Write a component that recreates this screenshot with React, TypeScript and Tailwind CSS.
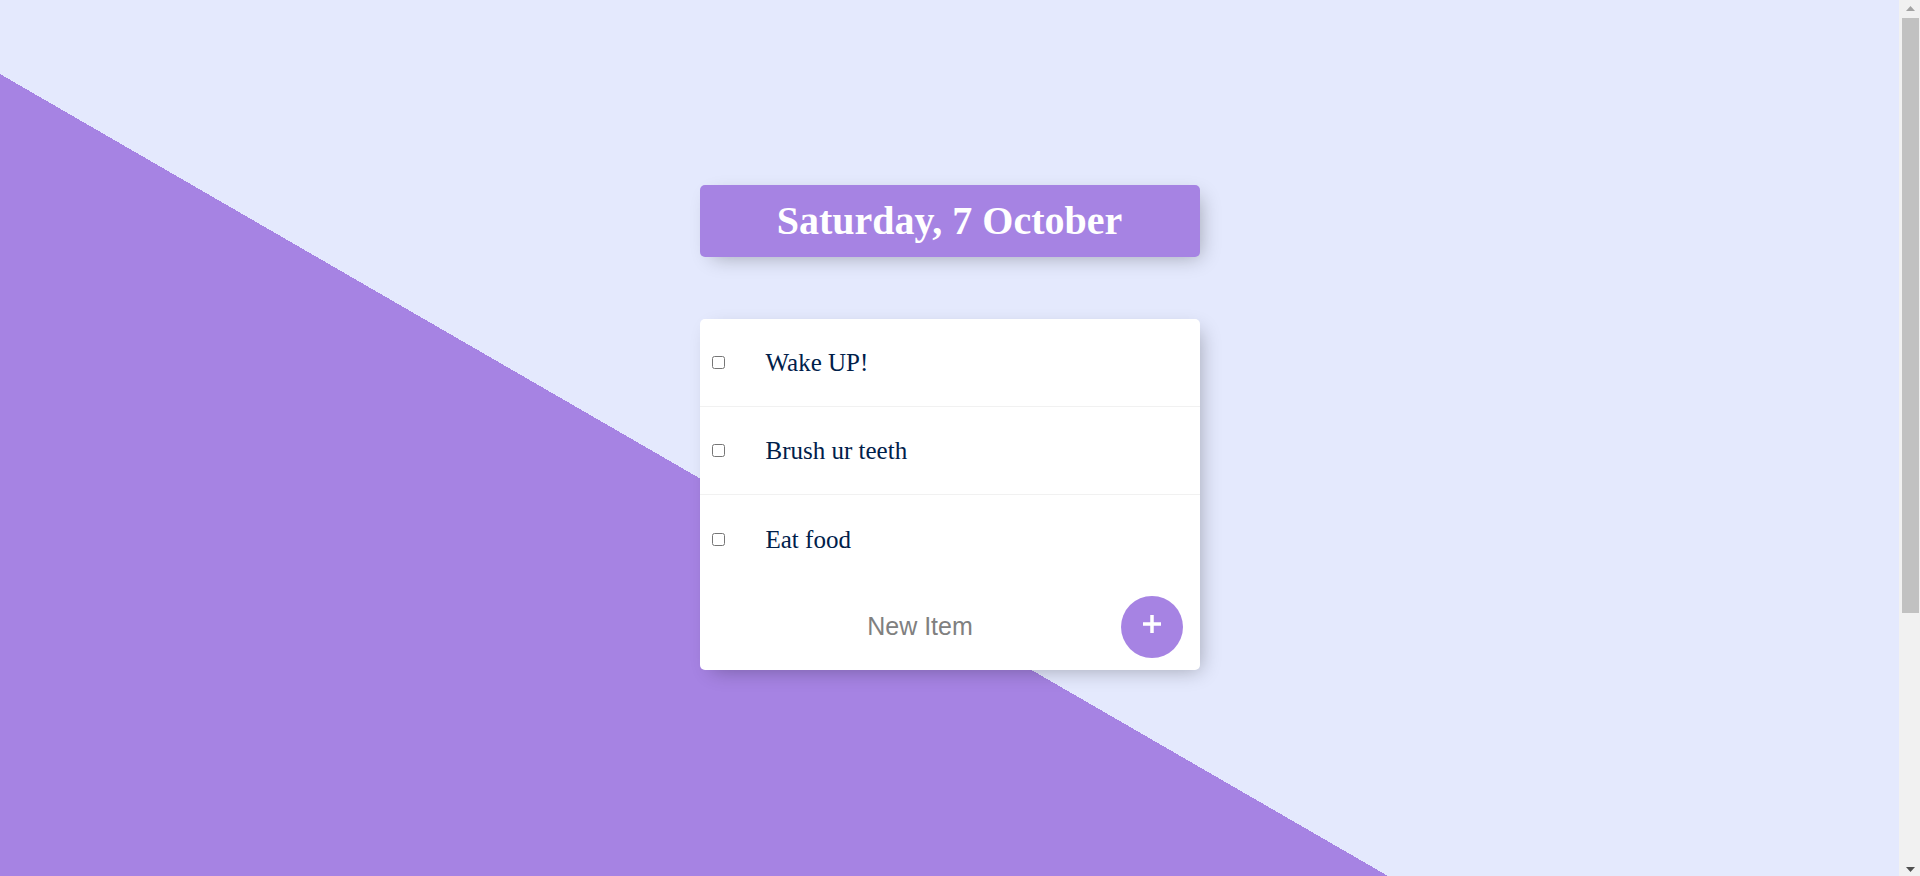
import React from "react";

const items = ["Wake UP!", "Brush ur teeth", "Eat food"];

function ScrollStrip() {
  return (
    <div className="flex h-[876px] w-[21px] shrink-0 flex-col items-center bg-[#F1F1F1]">
      <div className="flex h-[18px] w-full justify-center pt-[6px] pl-[1px]">
        <svg width="9" height="5" viewBox="0 0 9 5" aria-hidden="true">
          <polygon points="4.5,0 9,5 0,5" fill="#A3A3A3" />
        </svg>
      </div>
      <div className="ml-[1px] h-[595px] w-[17px] bg-[#C1C1C1]" />
      <div className="flex-1" />
      <div className="flex h-[14px] w-full justify-center pl-[1px] pt-[5px]">
        <svg width="9" height="5" viewBox="0 0 9 5" aria-hidden="true">
          <polygon points="0,0 9,0 4.5,5" fill="#505050" />
        </svg>
      </div>
    </div>
  );
}

export default function App() {
  return (
    <div className="flex h-[876px] w-full overflow-hidden bg-[#E4E9FD]">
      <div className="h-[876px] min-w-0 flex-1 overflow-hidden">
        <div className="min-h-[2078px] w-full bg-[#E4E9FD] bg-[linear-gradient(to_top_right,#A683E3_50%,#E4E9FD_50%)] bg-no-repeat bg-[position:0px_74px] bg-[size:2776px_1604px] pt-[185px]">
          <div className="mx-auto w-[500px]">
            <div className="flex h-[72px] items-center justify-center rounded-[5px] bg-[#A683E3] shadow-[6px_6px_19px_-6px_rgba(0,0,0,0.3)]">
              <h1 className="m-0 text-[40px] font-bold leading-none text-white [font-family:'Liberation_Serif','Times_New_Roman',serif]">
                Saturday, 7 October
              </h1>
            </div>

            <div className="mt-[62px] rounded-[5px] bg-white shadow-[6px_6px_19px_-6px_rgba(0,0,0,0.3)]">
              {items.map((t, i) => (
                <div
                  key={t}
                  className={
                    i < items.length - 1
                      ? "flex h-[88px] items-center border-b border-[#F1F1F1]"
                      : "flex h-[88px] items-center"
                  }
                >
                  <input
                    type="checkbox"
                    className="ml-[12px] m-0 h-[13px] w-[13px] shrink-0"
                  />
                  <p className="m-0 ml-[41px] text-[25px] leading-none text-[#00204a] [font-family:'Liberation_Serif','Times_New_Roman',serif]">
                    {t}
                  </p>
                </div>
              ))}
              <div className="flex h-[87px] items-center pl-[25px]">
                <input
                  type="text"
                  placeholder="New Item"
                  className="h-[75px] w-[391px] border-none bg-transparent text-center text-[25px] outline-none placeholder:text-[#808080] placeholder:opacity-100 [font-family:'Liberation_Sans',Arial,sans-serif]"
                />
                <button className="ml-[5px] flex h-[62px] w-[62px] items-center justify-center rounded-full bg-[#A683E3] pb-[6px]">
                  <svg width="18" height="18" viewBox="0 0 18 18" aria-hidden="true">
                    <rect x="7.25" y="0" width="3.5" height="18" fill="#ffffff" />
                    <rect x="0" y="7.25" width="18" height="3.5" fill="#ffffff" />
                  </svg>
                </button>
              </div>
            </div>
          </div>
        </div>
      </div>
      <ScrollStrip />
    </div>
  );
}
